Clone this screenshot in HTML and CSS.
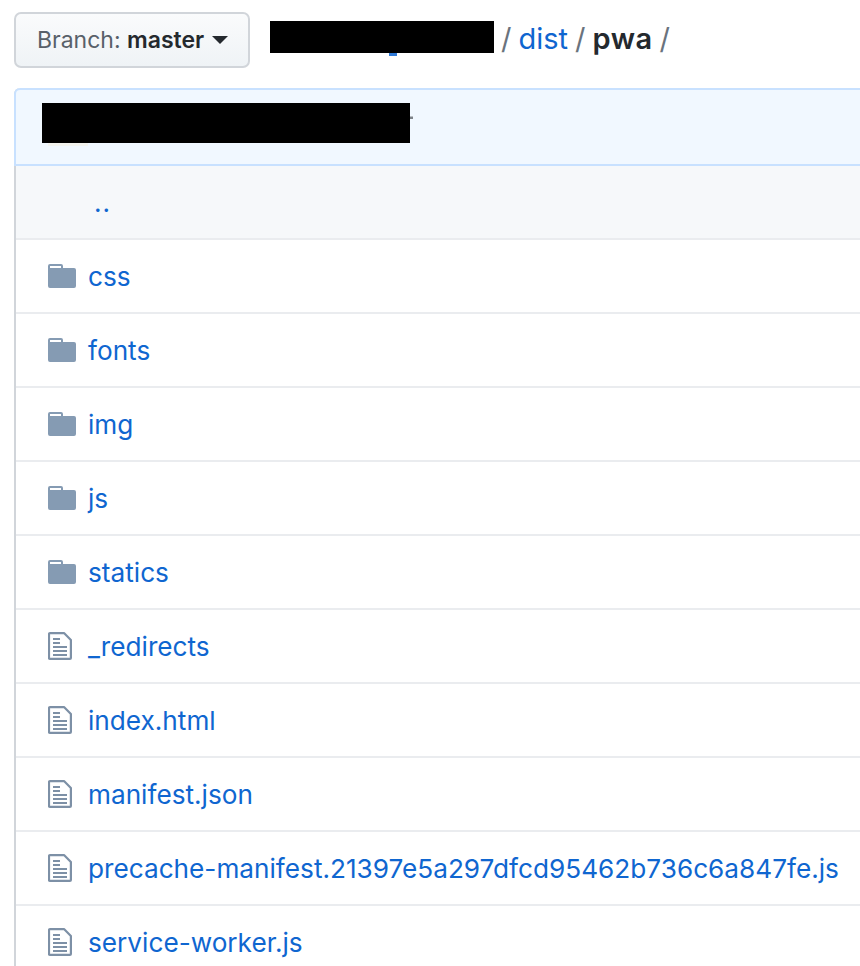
FILE: index.html
```html
<!DOCTYPE html>
<html lang="en">
<head>
<meta charset="UTF-8">
<title>dist/pwa</title>
<link rel="stylesheet" href="styles.css">
</head>
<body>

<svg class="defs" width="0" height="0" aria-hidden="true">
  <symbol id="icon-folder" viewBox="0 0 28 24">
    <path fill="#859bb3" fill-rule="evenodd" d="M2 0h11a2 2 0 0 1 2 2v2h11a2 2 0 0 1 2 2v16a2 2 0 0 1-2 2H2a2 2 0 0 1-2-2V2a2 2 0 0 1 2-2zM2 2v2h11V2z"/>
  </symbol>
  <symbol id="icon-file" viewBox="0 0 24 28">
    <path fill="none" stroke="#7d90a6" stroke-width="2.2" stroke-linejoin="round" d="M2 1.100h14l6.900 7v17.800a1 1 0 0 1-1 1H2a1 1 0 0 1-1-1V2.100a1 1 0 0 1 1-1z"/>
    <path fill="none" stroke="#7d90a6" stroke-width="2" d="M5 7h7M5 11h7M5 15h14M5 19h14M5 23h14"/>
  </symbol>
</svg>

<div class="top">
  <button class="branch">Branch: <b>master</b><span class="caret"></span></button>
  <div class="crumbs">
    <span class="redact redact-repo"></span>
    <span class="sep">/</span>
    <a href="#">dist</a>
    <span class="sep">/</span>
    <b>pwa</b>
    <span class="sep">/</span>
  </div>
</div>

<div class="files">
  <div class="commit"><span class="redact redact-commit"></span></div>
  <div class="row up"><a href="#">..</a></div>
  <div class="row"><svg class="ico-folder"><use href="#icon-folder"/></svg><a href="#">css</a></div>
  <div class="row"><svg class="ico-folder"><use href="#icon-folder"/></svg><a href="#">fonts</a></div>
  <div class="row"><svg class="ico-folder"><use href="#icon-folder"/></svg><a href="#">img</a></div>
  <div class="row"><svg class="ico-folder"><use href="#icon-folder"/></svg><a href="#">js</a></div>
  <div class="row"><svg class="ico-folder"><use href="#icon-folder"/></svg><a href="#">statics</a></div>
  <div class="row"><svg class="ico-file"><use href="#icon-file"/></svg><a href="#">_redirects</a></div>
  <div class="row"><svg class="ico-file"><use href="#icon-file"/></svg><a href="#">index.html</a></div>
  <div class="row"><svg class="ico-file"><use href="#icon-file"/></svg><a href="#">manifest.json</a></div>
  <div class="row"><svg class="ico-file"><use href="#icon-file"/></svg><a href="#">precache-manifest.21397e5a297dfcd95462b736c6a847fe.js</a></div>
  <div class="row"><svg class="ico-file"><use href="#icon-file"/></svg><a href="#">service-worker.js</a></div>
</div>

</body>
</html>
```

FILE: styles.css
```css
html, body { height: 966px; overflow: hidden; }
body { margin: 0; background: #fff; color: #24292e; font-family: Inter, "Liberation Sans", sans-serif; font-size: 26.2px; }
a { color: #0f66d0; text-decoration: none; }
.defs { display: block; }

.top { display: flex; align-items: center; height: 56px; padding: 12px 0 0 14px; }
.branch { display: flex; align-items: center; box-sizing: border-box; width: 236px; height: 56px; padding: 0 0 0 21px; border: 2px solid #d1d5da; border-radius: 7px; background: linear-gradient(#fafbfc, #eff3f6); color: #586069; font: inherit; font-size: 23px; white-space: pre; }
.branch b { color: #24292e; font-weight: 600; }
.caret { margin-left: 8px; border: 8px solid transparent; border-top-color: #24292e; border-bottom: 0; }

.crumbs { display: flex; align-items: center; gap: 7px; margin: 0 0 6px 20px; font-size: 29px; }
.crumbs a, .crumbs b, .sep { padding-top: 2px; }
.crumbs b { font-weight: 600; letter-spacing: 0.5px; }
.sep { color: #6a737d; }
.redact { display: block; position: relative; background: #000; }
.redact-repo { width: 224px; height: 32px; }
.redact-repo::after { content: ""; position: absolute; left: 119px; top: 32px; width: 8px; height: 3px; background: #2f7ad8; }
.redact-commit { width: 368px; height: 40px; }
.redact-commit::before { content: ""; position: absolute; left: 6px; top: 40px; width: 40px; height: 3px; background: #f3f3ee; }
.redact-commit::after { content: ""; position: absolute; right: -3px; top: 14px; width: 3px; height: 2px; background: #7c8288; box-shadow: 0 -1px 0 #b9bec4; }

.files { box-sizing: border-box; width: 860px; margin: 20px 0 0 14px; border-left: 2px solid #d1d5da; border-top-left-radius: 6px; }
.commit { box-sizing: border-box; height: 78px; padding: 13px 0 0 26px; margin-left: -2px; border: solid #c8e1ff; border-width: 2px 0 2px 2px; border-top-left-radius: 6px; background: #f1f8ff; }
.row { display: flex; align-items: center; box-sizing: border-box; height: 74px; border-bottom: 2px solid #eaecef; }
.up { background: #f6f8fa; padding-left: 78px; letter-spacing: 1px; }
.ico-folder { width: 28px; height: 24px; margin: 0 12px 0 32px; }
.ico-file { width: 24px; height: 28px; margin: 0 16px 0 32px; }
```
